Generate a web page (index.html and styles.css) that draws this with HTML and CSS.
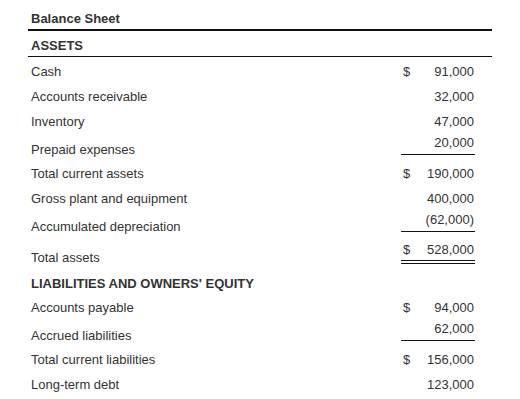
FILE: index.html
```html
<!DOCTYPE html>
<html>
<head>
<meta charset="utf-8">
<link rel="stylesheet" href="styles.css">
</head>
<body>
<div class="sheet">
  <div class="title">Balance Sheet</div>
  <div class="section">ASSETS</div>
  <div class="rows">
    <div class="row"><div class="label">Cash</div><div class="amt"><span>$</span><span>91,000</span></div></div>
    <div class="row"><div class="label">Accounts receivable</div><div class="amt"><span></span><span>32,000</span></div></div>
    <div class="row"><div class="label">Inventory</div><div class="amt"><span></span><span>47,000</span></div></div>
    <div class="row u"><div class="label">Prepaid expenses</div><div class="amt"><span></span><span>20,000</span></div></div>
    <div class="row"><div class="label">Total current assets</div><div class="amt"><span>$</span><span>190,000</span></div></div>
    <div class="row"><div class="label">Gross plant and equipment</div><div class="amt"><span></span><span>400,000</span></div></div>
    <div class="row u wide"><div class="label">Accumulated depreciation</div><div class="amt"><span></span><span>(62,000)</span></div></div>
    <div class="row total"><div class="label">Total assets</div><div class="amt"><span>$</span><span>528,000</span></div></div>
    <div class="row head"><div class="label">LIABILITIES AND OWNERS' EQUITY</div></div>
    <div class="row"><div class="label">Accounts payable</div><div class="amt"><span>$</span><span>94,000</span></div></div>
    <div class="row u"><div class="label">Accrued liabilities</div><div class="amt"><span></span><span>62,000</span></div></div>
    <div class="row"><div class="label">Total current liabilities</div><div class="amt"><span>$</span><span>156,000</span></div></div>
    <div class="row"><div class="label">Long-term debt</div><div class="amt"><span></span><span>123,000</span></div></div>
  </div>
</div>
</body>
</html>
```

FILE: styles.css
```css
html, body {
  margin: 0;
  padding: 0;
  background: #ffffff;
}

body {
  font-family: "Liberation Sans", Arial, sans-serif;
  font-size: 13px;
  line-height: 15px;
  color: #333333;
}

.sheet {
  margin-left: 28px;
  width: 464px;
}

.title {
  font-weight: bold;
  padding: 11px 0 3px 3px;
  border-bottom: 2px solid #111111;
}

.section {
  font-weight: bold;
  padding: 7px 0 3px 3px;
  border-bottom: 1px solid #111111;
}

.rows {
  padding-top: 2px;
}

.row {
  display: flex;
  align-items: flex-start;
  height: 25px;
}

.label {
  flex: 1;
  padding: 5px 0 0 3px;
  white-space: nowrap;
}

.amt {
  width: 71px;
  margin-right: 17px;
  padding: 5px 1px 0 2px;
  display: flex;
  justify-content: space-between;
}

.row.u {
  height: 27px;
}

.row.u .label {
  padding-top: 8px;
}

.row.u .amt {
  padding-top: 1px;
  padding-bottom: 4px;
  border-bottom: 1px solid #111111;
}

.row.wide {
  height: 30px;
}

.row.total {
  height: 30px;
}

.row.total .label {
  padding-top: 9px;
}

.row.total .amt {
  padding-top: 1px;
  padding-bottom: 3px;
  border-bottom: 4px double #111111;
}

.row.head {
  height: 24px;
  font-weight: bold;
}
```
